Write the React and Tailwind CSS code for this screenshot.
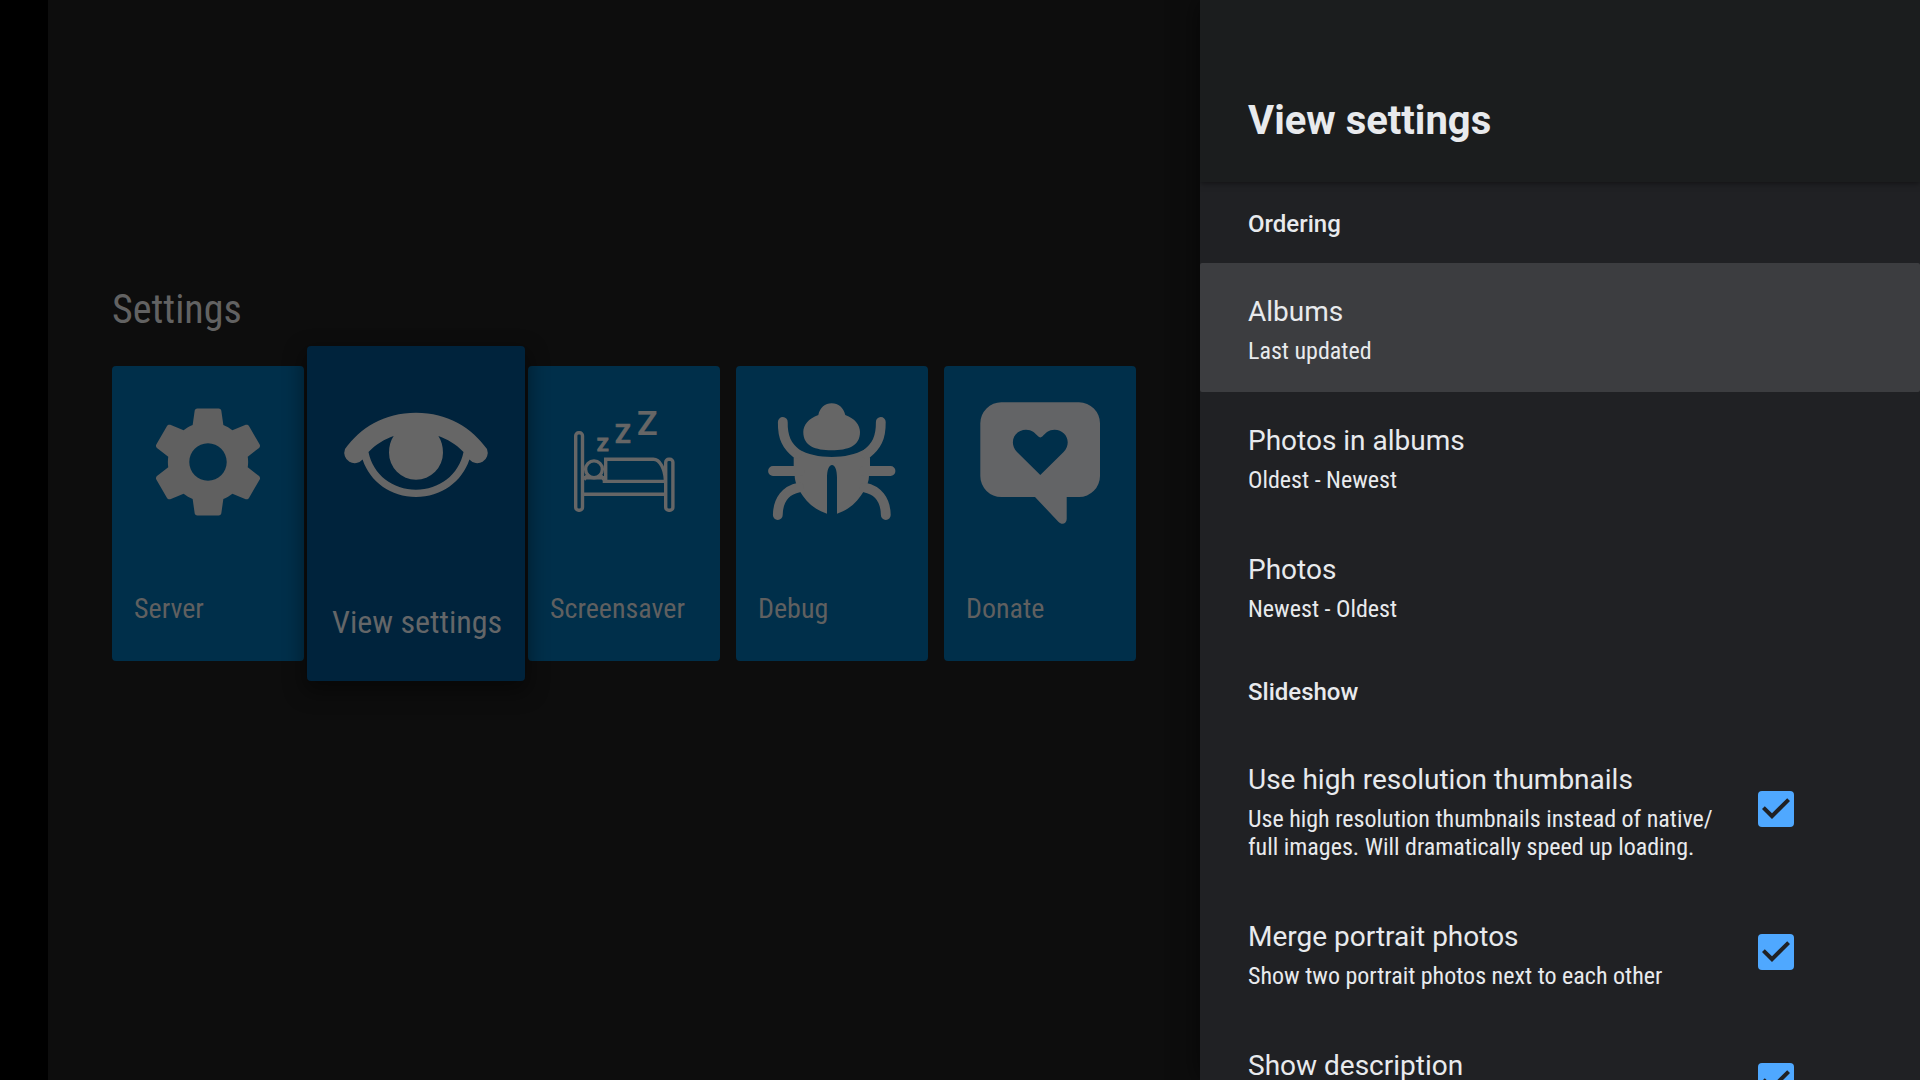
import { useState } from "react";

const iconClass = "block h-auto w-full";

function GearIcon() {
  return (
    <svg viewBox="0 0 192 192" className={iconClass} fill="#606060" aria-hidden="true">
      <path
        transform="translate(31.8 31.8) scale(5.35)"
        d="M19.43 12.98c.04-.32.07-.64.07-.98s-.03-.66-.07-.98l2.11-1.65c.19-.15.24-.42.12-.64l-2-3.46c-.12-.22-.39-.3-.61-.22l-2.49 1c-.52-.4-1.08-.73-1.69-.98l-.38-2.65C14.46 2.18 14.25 2 14 2h-4c-.25 0-.46.18-.49.42l-.38 2.65c-.61.25-1.17.59-1.69.98l-2.49-1c-.23-.09-.49 0-.61.22l-2 3.46c-.13.22-.07.49.12.64l2.11 1.65c-.04.32-.07.65-.07.98s.03.66.07.98l-2.11 1.65c-.19.15-.24.42-.12.64l2 3.46c.12.22.39.3.61.22l2.49-1c.52.4 1.08.73 1.69.98l.38 2.65c.03.24.24.42.49.42h4c.25 0 .46-.18.49-.42l.38-2.65c.61-.25 1.17-.59 1.69-.98l2.49 1c.23.09.49 0 .61-.22l2-3.46c.12-.22.07-.49-.12-.64l-2.11-1.65zM12 15.5c-1.93 0-3.5-1.57-3.5-3.5s1.57-3.5 3.5-3.5 3.5 1.57 3.5 3.5-1.57 3.5-3.5 3.5z"
      />
    </svg>
  );
}

function EyeIcon() {
  return (
    <svg viewBox="0 0 218 218" className={iconClass} fill="#666666" aria-hidden="true">
      <path
        fillRule="evenodd"
        d="M109 66.7C141 66.7 165 82 180 103A10.4 10.4 0 0 1 162.4 113.5C155 136 134 151 109 151C84 151 63 136 55.6 113.5A10.4 10.4 0 0 1 38 103C53 82 77 66.7 109 66.7ZM61.5 106C69 98 78 93 86.6 90C83.5 95 82 100 82 106.7A27 27 0 0 0 136 106.7C136 100 134.5 95 131.4 90C140 93 149 98 156.5 106C152 129 132 143.7 109 143.7C86 143.7 66 129 61.5 106Z"
      />
    </svg>
  );
}

function BedIcon() {
  return (
    <svg viewBox="0 0 192 192" className={iconClass} fill="none" stroke="#666666" strokeWidth="3.4" aria-hidden="true">
      <rect x="47.7" y="66.7" width="6.8" height="77.6" rx="3" />
      <rect x="137.7" y="93.3" width="7.2" height="51" rx="3" />
      <circle cx="66" cy="103.3" r="8.4" />
      <path d="M56 128.3H137.7M56 111.8H76M56 113.5L60 109M72 109L76 113.5M74.7 115.4H137.7M77.7 115.4V93.3H125.3C132 93.3 136.8 103 137.4 114" />
      <g fill="#666666" fontFamily="Roboto, sans-serif" fontWeight="700">
        <text x="69" y="85" fontSize="19" strokeWidth="1">Z</text>
        <text x="87" y="77" fontSize="26" strokeWidth="0.6">Z</text>
        <text x="109" y="69" fontSize="34" fontWeight="600" strokeWidth="0.2">Z</text>
      </g>
    </svg>
  );
}

function BugIcon() {
  return (
    <svg viewBox="0 0 192 192" className={iconClass} fill="#666666" aria-hidden="true">
      <path d="M82.3 49C84 41.5 89 37.3 95.7 37.3S107.5 41.5 109.3 49C119 52.5 124 59 124 66C124 80 112 84.3 95.7 84.3S67.3 80 67.3 66C67.3 59 72.5 52.5 82.3 49Z" />
      <path d="M62.3 83.3C72 88.5 83 91 95.7 91C108.3 91 119.3 88.5 129 83.3L134 92V100L133 110C133 115 131 120 127.3 126C120 138 111 144.5 101 147.7V112C101 104 99 99 96 99S91 104 91 112V147.7C81 144.5 71.5 138 64.3 126C60.5 120 58.7 114 58.7 110L57.7 100V92Z" />
      <g fill="none" stroke="#666666" strokeWidth="9.8" strokeLinecap="round">
        <path d="M46.8 56C46.5 72 51 80 61 88" />
        <path d="M144.8 56C145 72 140.5 80 130.5 88" />
        <path d="M37 105H64M128 105H154.5" />
        <path d="M41.8 149C42 134 50 124 63 121.5" />
        <path d="M149.8 149C149.6 134 141.6 124 128.6 121.5" />
      </g>
    </svg>
  );
}

function DonateIcon() {
  return (
    <svg viewBox="0 0 192 192" className={iconClass} fill="#636466" aria-hidden="true">
      <path
        fillRule="evenodd"
        d="M57.5 36.3H135A21 21 0 0 1 156 57.3V110A21 21 0 0 1 135 131H122.7V153C122.7 157.5 118 159.5 114.6 156L91 131H57.5A21 21 0 0 1 36.3 110V57.3A21 21 0 0 1 57.5 36.3ZM96.3 109L73 86C64 76 71 63.7 82 63.7C88 63.7 91 67 94 70.3Q96.3 72.5 98.6 70.3C101.6 67 104.6 63.7 110.6 63.7C121.6 63.7 128.6 76 119.6 86Z"
      />
    </svg>
  );
}

const cards = [
  { label: "Server", Icon: GearIcon },
  { label: "View settings", Icon: EyeIcon, focused: true },
  { label: "Screensaver", Icon: BedIcon },
  { label: "Debug", Icon: BugIcon },
  { label: "Donate", Icon: DonateIcon },
];

function Card({ label, Icon, focused }) {
  return (
    <button
      type="button"
      className={
        focused
          ? "relative z-10 -mx-[13px] flex h-[335px] w-[218px] flex-col rounded-sm bg-[#00233c] text-left shadow-[0_8px_20px_4px_rgba(0,0,0,0.4)]"
          : "flex h-[295px] w-48 flex-col rounded-sm bg-[#002f4a] text-left"
      }
    >
      <Icon />
      <span
        className={
          focused
            ? "block pt-10 pl-[25px] font-['Roboto_Condensed','Roboto',sans-serif] text-[32px] leading-[36px] whitespace-nowrap text-[#646668]"
            : "block pt-[35px] pl-[22px] font-['Roboto_Condensed','Roboto',sans-serif] text-[28px] leading-[32px] whitespace-nowrap text-[#606060]"
        }
      >
        {label}
      </span>
    </button>
  );
}

function Category({ children }) {
  return (
    <h2 className="px-12 pt-7 pb-[25px] text-2xl leading-[28px] font-medium">{children}</h2>
  );
}

function RowText({ title, summary }) {
  return (
    <>
      <span className="block text-[28px] leading-[36px]">{title}</span>
      <span className="mt-[7px] block min-h-7 font-['Roboto_Condensed','Roboto',sans-serif] text-2xl leading-[28px]">
        {summary}
      </span>
    </>
  );
}

function ListRow({ title, summary, selected }) {
  return (
    <button
      type="button"
      className={
        selected
          ? "block w-full rounded-xs bg-[#3c3d40] px-12 pt-[31px] pb-[27px] text-left"
          : "block w-full px-12 pt-[31px] pb-[27px] text-left"
      }
    >
      <RowText title={title} summary={summary} />
    </button>
  );
}

function CheckRow({ title, summary }) {
  const [on, setOn] = useState(true);
  return (
    <label className="flex w-full items-center pr-[126px] pl-12">
      <span className="min-w-0 flex-1 pt-[31px] pr-6 pb-[27px]">
        <RowText title={title} summary={summary} />
      </span>
      <span className="grid shrink-0 place-items-center pb-[2px]">
        <input
          type="checkbox"
          checked={on}
          onChange={(e) => setOn(e.target.checked)}
          className="peer col-start-1 row-start-1 size-9 appearance-none rounded-sm border-4 border-[#9aa0a6] checked:border-0 checked:bg-[#4fa8ff]"
        />
        <svg
          viewBox="0 0 36 36"
          className="pointer-events-none col-start-1 row-start-1 hidden size-9 fill-[#202124] peer-checked:block"
          aria-hidden="true"
        >
          <path d="M14 28L4 18L6.8 15.2L14 22.3L29.2 7.2L32 10Z" />
        </svg>
      </span>
    </label>
  );
}

export default function App() {
  return (
    <div className="flex h-screen overflow-hidden bg-[#0d0d0d] font-['Roboto',sans-serif]">
      <div className="w-12 shrink-0 bg-black" />
      <main className="min-w-0 flex-1 pt-[286px] pl-16">
        <h1 className="font-['Roboto_Condensed','Roboto',sans-serif] text-[40px] leading-[48px] text-[#626262]">Settings</h1>
        <div className="mt-3 flex items-center gap-4">
          {cards.map((card) => (
            <Card key={card.label} {...card} />
          ))}
        </div>
      </main>
      <aside className="relative z-20 flex w-[37.5%] shrink-0 flex-col overflow-hidden bg-[#202124] text-[#e8eaed] shadow-[0_0_24px_rgba(0,0,0,0.6)]">
        <header className="relative z-10 bg-[#1b1d1e] px-12 pt-[97px] pb-[37px] shadow-[0_1px_6px_rgba(0,0,0,0.5)]">
          <h1 className="text-[40px] leading-[48px] font-bold">View settings</h1>
        </header>
        <div className="min-h-0 flex-1 overflow-hidden">
          <Category>Ordering</Category>
          <ListRow title="Albums" summary="Last updated" selected />
          <ListRow title="Photos in albums" summary="Oldest - Newest" />
          <ListRow title="Photos" summary="Newest - Oldest" />
          <Category>Slideshow</Category>
          <CheckRow
            title="Use high resolution thumbnails"
            summary={
              <>
                Use high resolution thumbnails instead of native/
                <wbr />
                full images. Will dramatically speed up loading.
              </>
            }
          />
          <CheckRow title="Merge portrait photos" summary="Show two portrait photos next to each other" />
          <CheckRow title="Show description" />
        </div>
      </aside>
    </div>
  );
}
